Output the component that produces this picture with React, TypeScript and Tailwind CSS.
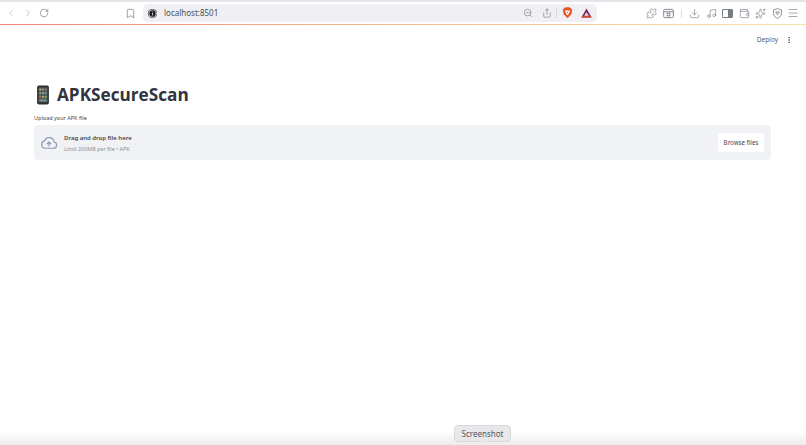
// App.tsx
// Browser window showing the APKSecureScan upload page.

import { ChevronLeft, ChevronRight, RotateCw, Bookmark, Info, ZoomOut, Share, Puzzle, Download, Music, Wallet, Sparkles, Menu, EllipsisVertical } from "lucide-react";

function BraveIcon() {
  return (
    <svg viewBox="0 0 16 18" className="h-[12px] w-[11px]">
      <path d="M3 1.5 L5.5 0.5 H10.5 L13 1.5 L15 4 L13.8 11 L8 17 L2.2 11 L1 4 Z" fill="#e8552b" />
      <path d="M4 5 L6.5 5.5 L8 5 L9.5 5.5 L12 5 L10.5 9 L9.5 11 L8 12.5 L6.5 11 L5.5 9 Z" fill="#fff" />
      <path d="M6.5 8 L8 7 L9.5 8 L8 9.5 Z" fill="#e8552b" />
    </svg>
  );
}

function TriangleIcon() {
  return (
    <svg viewBox="0 0 16 14" className="h-[10px] w-[11px]">
      <path d="M8 0.5 L15.5 13.5 H0.5 Z" fill="#6b2a6e" />
      <path d="M8 5.5 L11.5 11.5 H4.5 Z" fill="#f0d9c8" />
      <path d="M0.5 13.5 H15.5 L14 11 H2 Z" fill="#d9452b" />
    </svg>
  );
}

function PhoneIcon() {
  return (
    <svg viewBox="0 0 14 22" className="h-[20px] w-[14px]">
      <rect x="0.5" y="0.5" width="13" height="21" rx="2" fill="#2d2f33" />
      <rect x="2" y="2.5" width="10" height="16.5" fill="#4c5a52" />
      <rect x="3" y="4" width="2" height="2" fill="#d8b24a" />
      <rect x="6" y="4" width="2" height="2" fill="#7aa3c9" />
      <rect x="9" y="4" width="2" height="2" fill="#c9685a" />
      <rect x="3" y="8" width="2" height="2" fill="#84b26b" />
      <rect x="6" y="8" width="2" height="2" fill="#c98fb8" />
      <rect x="9" y="8" width="2" height="2" fill="#7aa3c9" />
      <rect x="3" y="12" width="2" height="2" fill="#c9685a" />
      <rect x="6" y="12" width="2" height="2" fill="#d8b24a" />
      <rect x="9" y="12" width="2" height="2" fill="#84b26b" />
      <rect x="3" y="16" width="8" height="2" fill="#7f93a3" />
    </svg>
  );
}

function CloudUpload() {
  return (
    <svg viewBox="0 0 24 24" className="h-[18px] w-[18px] text-[#8f9bb3]" fill="none" stroke="currentColor" strokeWidth="1.6">
      <path d="M6.5 19 H18 a4.2 4.2 0 0 0 .8-8.3 A6.6 6.6 0 0 0 6 9.2 A5 5 0 0 0 6.5 19 Z" />
      <path d="M12 16 V11 M9.6 13 L12 10.6 L14.4 13" strokeLinecap="round" strokeLinejoin="round" />
    </svg>
  );
}

export default function App() {
  return (
    <div className="relative flex h-[445px] w-[806px] flex-col overflow-hidden bg-white font-['Noto_Sans',sans-serif]">
      {/* Browser toolbar */}
      <div className="h-[2px] bg-[#e4e4ea]" />
      <div className="flex h-[22px] items-center bg-white pl-[5px] pr-[5px] text-[#777b84]">
        <ChevronLeft className="h-[12px] w-[12px] text-[#c4c6cc]" strokeWidth={1.5} />
        <ChevronRight className="ml-[5px] h-[12px] w-[12px] text-[#a9acb3]" strokeWidth={1.5} />
        <RotateCw className="ml-[5px] h-[10px] w-[10px]" strokeWidth={1.6} />
        <Bookmark className="ml-[76px] h-[11px] w-[11px]" strokeWidth={1.5} />
        <div className="ml-[7px] flex h-[18px] w-[454px] items-center rounded-[5px] bg-[#f0f0f4] pl-[5px] pr-[4px]">
          <Info className="h-[9px] w-[9px] rounded-full bg-[#222] text-white" strokeWidth={2} />
          <span className="ml-[7px] text-[8px] text-[#4a4d52]">localhost:8501</span>
          <ZoomOut className="ml-auto h-[10px] w-[10px]" strokeWidth={1.5} />
          <Share className="ml-[9px] h-[10px] w-[10px]" strokeWidth={1.5} />
          <div className="ml-[4px] h-[9px] w-px bg-[#d4d5da]" />
          <div className="ml-[5px]"><BraveIcon /></div>
          <div className="ml-[8px] mr-[1px]"><TriangleIcon /></div>
        </div>
        <Puzzle className="ml-[49px] h-[11px] w-[11px]" strokeWidth={1.4} />
        <svg viewBox="0 0 16 16" className="ml-[6px] h-[11px] w-[11px]" fill="none" stroke="currentColor" strokeWidth="1.3">
          <rect x="1" y="2" width="14" height="12" rx="1.5" />
          <path d="M1 5.5 H15" />
          <rect x="6" y="7.5" width="4" height="4" />
        </svg>
        <div className="ml-[7px] h-[9px] w-px bg-[#dcdde1]" />
        <Download className="ml-[7px] h-[11px] w-[11px]" strokeWidth={1.4} />
        <Music className="ml-[6px] h-[11px] w-[11px]" strokeWidth={1.4} />
        <div className="ml-[5px] flex h-[9px] w-[11px] rounded-[1px] border border-[#777b84]">
          <div className="ml-auto h-full w-[4px] bg-[#777b84]" />
        </div>
        <Wallet className="ml-[6px] h-[11px] w-[11px]" strokeWidth={1.4} />
        <Sparkles className="ml-[5px] h-[11px] w-[11px]" strokeWidth={1.4} />
        <svg viewBox="0 0 16 18" className="ml-[6px] h-[11px] w-[11px]" fill="none" stroke="currentColor" strokeWidth="1.3">
          <path d="M8 1 L14.5 3 V9 C14.5 13 11 15.8 8 17 C5 15.8 1.5 13 1.5 9 V3 Z" />
          <path d="M5 6.5 H11 L8 11 Z" />
        </svg>
        <Menu className="ml-[4px] h-[12px] w-[12px]" strokeWidth={1.3} />
      </div>
      {/* Streamlit decoration line */}
      <div className="h-px bg-gradient-to-r from-[#f0837a] via-[#f5b98f] to-[#f7e2a4]" />

      {/* Streamlit header */}
      <div className="flex h-[30px] items-center justify-end pr-[13px]">
        <span className="text-[6.5px] text-[#5a5d66]">Deploy</span>
        <EllipsisVertical className="ml-[7px] h-[8px] w-[8px] text-[#50525c]" strokeWidth={2.5} />
      </div>

      {/* Page content */}
      <div className="px-[34px] pt-[26px]">
        <h1 className="flex h-[28px] items-center text-[17.2px] font-bold leading-none text-[#31333f]">
          <div className="ml-[2px]"><PhoneIcon /></div>
          <span className="ml-[7px] font-['Open_Sans',sans-serif]">APKSecureScan</span>
        </h1>
        <p className="mt-[5px] text-[5.5px] leading-[8px] text-[#45474f]">Upload your APK file</p>
        <div className="mt-[3px] flex h-[35px] w-[737px] items-center rounded-[4px] bg-[#f0f2f6] pl-[6px] pr-[7px]">
          <CloudUpload />
          <div className="ml-[6px]">
            <p className="text-[6px] font-semibold leading-[10px] text-[#45474f]">Drag and drop file here</p>
            <p className="mt-[2px] text-[5.4px] leading-[8px] text-[#8b8e98]">Limit 200MB per file • APK</p>
          </div>
          <button className="ml-auto h-[19px] w-[46px] rounded-[3px] bg-white text-[6.2px] text-[#45474f]">
            Browse files
          </button>
        </div>
      </div>

      {/* Desktop dock fade and tooltip */}
      <div className="absolute inset-x-0 bottom-0 h-[14px] bg-gradient-to-b from-white to-[#ececee]" />
      <div className="absolute bottom-[3px] left-[454px] flex h-[17px] w-[57px] items-center justify-center rounded-[4px] border border-[#d8d8da] bg-[#e8e8ea] text-[8px] text-[#55565a]">
        Screenshot
        <div className="absolute -bottom-[3px] left-[26px] h-[5px] w-[5px] rotate-45 bg-[#e8e8ea]" />
      </div>
    </div>
  );
}
